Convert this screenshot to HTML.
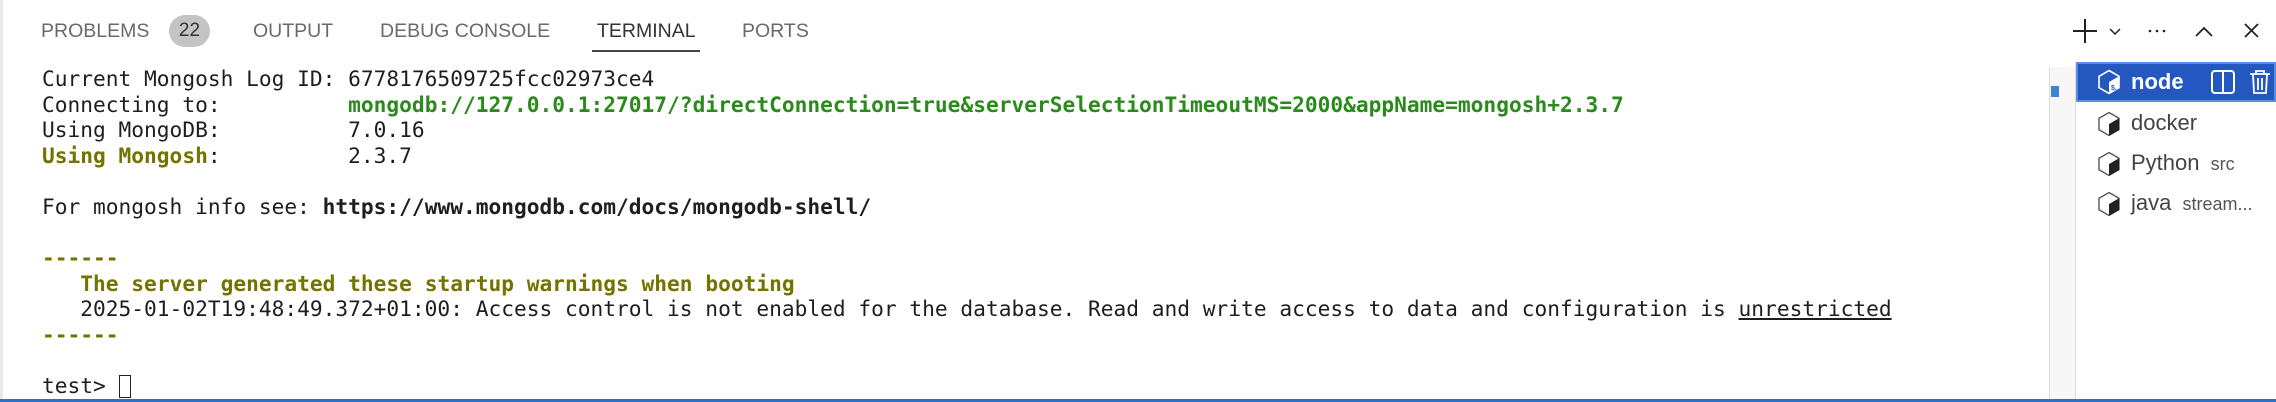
<!DOCTYPE html>
<html><head><meta charset="utf-8"><style>
*{margin:0;padding:0;box-sizing:border-box}
body{width:2276px;height:402px;background:#fff;position:relative;overflow:hidden;font-family:"Liberation Sans",sans-serif}
.tab{position:absolute;top:18px;font-size:19.5px;color:#6a6a6a;line-height:26px;white-space:nowrap}
.term{position:absolute;left:42px;top:66px;font-family:"DejaVu Sans Mono","Liberation Mono",monospace;font-size:21.2px;line-height:25.6px;color:#1e1e1e;white-space:pre}
.g{color:#2a8a1c;font-weight:bold}
.o{color:#737300;font-weight:bold}
.b{font-weight:bold}
.row{position:absolute;left:2076px;width:200px;height:40px;font-size:22px;color:#444;line-height:40px;white-space:nowrap}
.row svg{position:absolute;left:20px;top:8px}
.row span{position:absolute;left:55px}
.sm{font-size:18px;color:#555}
</style></head><body>
<div style="position:absolute;left:0;top:0;width:3px;height:402px;background:#e8e8e8"></div>
<div class="tab" style="left:41px">PROBLEMS</div>
<div style="position:absolute;left:169px;top:15px;width:41px;height:32px;border-radius:16px;background:#c4c4c4;font-size:19px;color:#333;text-align:center;line-height:32px">22</div>
<div class="tab" style="left:253px">OUTPUT</div>
<div class="tab" style="left:380px">DEBUG CONSOLE</div>
<div class="tab" style="left:597px;color:#333">TERMINAL</div>
<div style="position:absolute;left:592px;top:50px;width:108px;height:2px;background:#444"></div>
<div class="tab" style="left:742px">PORTS</div>

<svg style="position:absolute;left:2070px;top:14px" width="200" height="34" viewBox="0 0 200 34">
<g stroke="#222" stroke-width="2" fill="none">
<path d="M15 5V29M3 17H27"/>
<path d="M40 15l5 5 5-5" stroke-width="1.5"/>
<circle cx="80" cy="17" r="1.3" fill="#222" stroke="none"/><circle cx="87" cy="17" r="1.3" fill="#222" stroke="none"/><circle cx="94" cy="17" r="1.3" fill="#222" stroke="none"/>
<path d="M126 22l8-8 8 8" stroke-width="1.8"/>
<path d="M175 10l13 13M188 10l-13 13" stroke-width="1.8"/>
</g></svg>

<div class="term">Current Mongosh Log ID: 6778176509725fcc02973ce4
Connecting to:          <span class="g">mongodb://127.0.0.1:27017/?directConnection=true&amp;serverSelectionTimeoutMS=2000&amp;appName=mongosh+2.3.7</span>
Using MongoDB:          7.0.16
<span class="o">Using Mongosh</span>:          2.3.7

For mongosh info see: <span class="b">https://www.mongodb.com/docs/mongodb-shell/</span>

<span class="o">------</span>
   <span class="o">The server generated these startup warnings when booting</span>
   2025-01-02T19:48:49.372+01:00: Access control is not enabled for the database. Read and write access to data and configuration is <u>unrestricted</u>
<span class="o">------</span>

test&gt; <span style="display:inline-block;width:12px;height:23px;border:1.5px solid #222;vertical-align:-5px"></span></div>

<div style="position:absolute;left:2049px;top:67px;width:26px;height:335px;background:#f7f7f7;border-left:1px solid #ddd"></div>
<div style="position:absolute;left:2051px;top:86px;width:8px;height:11px;background:#3b86d4"></div>
<div style="position:absolute;left:2075px;top:63px;width:201px;height:339px;background:#fff;border-left:1px solid #ddd"></div>

<div class="row" style="top:62px;height:40px;background:#2458c0;border:2px solid #5a8ee6;color:#fff;font-weight:bold">
<svg width="26" height="26" viewBox="0 0 26 26" style="left:18px;top:5px"><path d="M13 1.5l10 5.8v11.4l-10 5.8-10-5.8V7.3z" fill="none" stroke="#fff" stroke-width="1.6"/><path d="M13 13l10-5.7v11.4l-10 5.8z" fill="#fff"/><text x="15" y="21" font-size="7" fill="#2458c0" font-family="Liberation Sans">$.</text></svg>
<span style="left:53px;top:-2px">node</span>
<svg width="26" height="26" viewBox="0 0 26 26" style="left:132px;top:5px"><rect x="2" y="2" width="22" height="22" rx="3" fill="none" stroke="#fff" stroke-width="2"/><path d="M13 2v22" stroke="#fff" stroke-width="2"/></svg>
<svg width="24" height="26" viewBox="0 0 24 26" style="left:170px;top:5px"><path d="M2 5h20M8 5V2h8v3M5 5l1 19h12l1-19M10 9v12M14 9v12" fill="none" stroke="#fff" stroke-width="1.8"/></svg>
</div>
<div class="row" style="top:103px"><svg width="26" height="26" viewBox="0 0 26 26"><path d="M13 1.5l10 5.8v11.4l-10 5.8-10-5.8V7.3z" fill="none" stroke="#555" stroke-width="1.4"/><path d="M13 13l10-5.7v11.4l-10 5.8z" fill="#222"/></svg><span>docker</span></div>
<div class="row" style="top:143px"><svg width="26" height="26" viewBox="0 0 26 26"><path d="M13 1.5l10 5.8v11.4l-10 5.8-10-5.8V7.3z" fill="none" stroke="#555" stroke-width="1.4"/><path d="M13 13l10-5.7v11.4l-10 5.8z" fill="#222"/></svg><span>Python <span class="sm" style="position:static">&nbsp;src</span></span></div>
<div class="row" style="top:183px"><svg width="26" height="26" viewBox="0 0 26 26"><path d="M13 1.5l10 5.8v11.4l-10 5.8-10-5.8V7.3z" fill="none" stroke="#555" stroke-width="1.4"/><path d="M13 13l10-5.7v11.4l-10 5.8z" fill="#222"/></svg><span>java <span class="sm" style="position:static">&nbsp;stream...</span></span></div>

<div style="position:absolute;left:0;top:399px;width:2276px;height:3px;background:#2b6fc7"></div>
</body></html>
